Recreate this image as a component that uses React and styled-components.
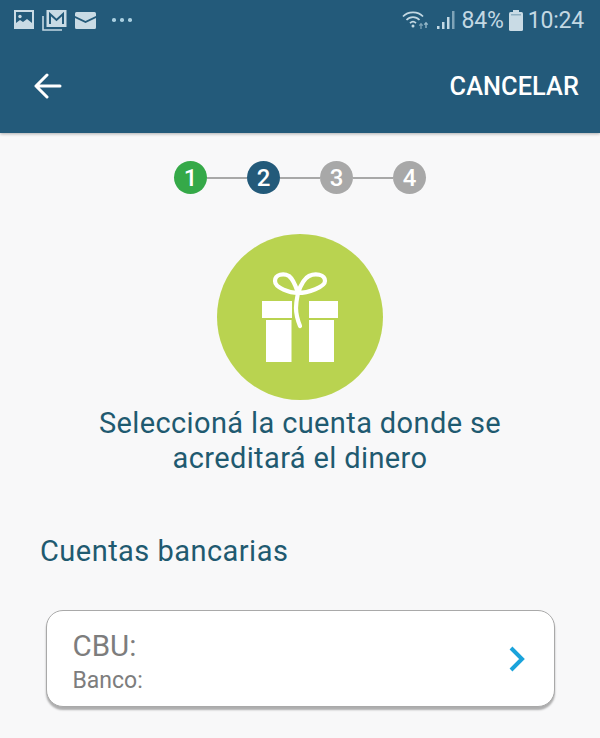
import React from "react";
import styled, { createGlobalStyle } from "styled-components";

const Global = createGlobalStyle`
  html, body { margin: 0; padding: 0; height: 100%; background: #f8f8f9; }
  body { font-family: Roboto, "Liberation Sans", sans-serif; overflow: hidden; }
`;
const Page = styled.div`width: 600px; height: 738px; overflow: hidden; background: #f8f8f9; display: flex; flex-direction: column; align-items: stretch;`;
const Header = styled.header`height: 133px; background: #235a7a; box-shadow: 0 1px 3px rgba(0,0,0,.3); flex: none; display: flex; flex-direction: column;`;
const StatusBar = styled.div`height: 38px; padding: 1px 16px 0 14px; box-sizing: content-box; display: flex; align-items: center; justify-content: space-between; color: #c3d8e3;`;
const StatusGroup = styled.div`display: flex; align-items: center; gap: ${p => p.$gap || 0}px;`;
const Dots = styled.div`display: flex; gap: 4.5px; margin-left: 8px;`;
const Dot = styled.span`width: 3.5px; height: 3.5px; border-radius: 50%; background: #a9cfe0;`;
const StatusText = styled.span`font-size: 23px; letter-spacing: -0.2px; color: #c3d8e3;`;
const AppBar = styled.div`flex: 1; display: flex; align-items: center; justify-content: space-between; padding: 0 21px 0 34px;`;
const Cancel = styled.span`font-size: 25.3px; font-weight: 500; color: #fff; letter-spacing: 0.1px;`;
const Main = styled.main`flex: 1; display: flex; flex-direction: column; align-items: center; position: relative;`;
const Stepper = styled.div`display: flex; align-items: center; margin-top: 28px;`;
const Step = styled.div`width: 33px; height: 33px; border-radius: 50%; background: ${p => p.$bg}; color: #fff; display: flex; align-items: center; justify-content: center; font-size: 24px; font-weight: 500; flex: none;`;
const Line = styled.div`width: 40px; height: 2px; background: #a8a8a8;`;
const GiftCircle = styled.div`width: 166px; height: 166px; border-radius: 50%; background: #b9d350; margin-top: 40px; flex: none; display: flex; align-items: center; justify-content: center;`;
const Title = styled.h1`margin: 6px 0 0; font-size: 29px; line-height: 35px; font-weight: 400; color: #1f5a70; text-align: center; letter-spacing: 0.38px;`;
const Section = styled.h2`align-self: flex-start; margin: 59px 0 0 40px; font-size: 29px; line-height: 32px; font-weight: 400; color: #1f5a70; letter-spacing: 0.47px;`;
const Card = styled.div`box-sizing: border-box; width: 509px; height: 97px; margin-top: 43px; background: #fff; border: 1.5px solid #a9a9a9; border-radius: 17px; box-shadow: 0 3px 2px rgba(0,0,0,.3); display: flex; align-items: center; justify-content: space-between; padding: 0 29px 0 26px;`;
const CardText = styled.div`display: flex; flex-direction: column; padding-top: 7px;`;
const Cbu = styled.span`font-size: 29.5px; line-height: 36px; color: #7d7d7d;`;
const Banco = styled.span`font-size: 23px; line-height: 33px; color: #7d7d7d;`;

const ImageIcon = () => (
  <svg width="20" height="20" viewBox="0 0 20 20">
    <rect x="0" y="0" width="20" height="19" fill="#c9dbe5" />
    <rect x="2" y="2" width="16" height="15" fill="#235a7a" />
    <circle cx="6" cy="6.5" r="1.7" fill="#c9dbe5" />
    <path d="M2 17v-4l4-3 3 2 4-3 5 4v4z" fill="#c9dbe5" />
  </svg>
);
const MailStack = () => (
  <svg width="25" height="21" viewBox="0 0 25 21">
    <path d="M1 6v14h19" fill="none" stroke="#c3d8e3" strokeWidth="1.6" />
    <rect x="4.5" y="0" width="20" height="17" fill="#c9dbe5" />
    <path d="M8 14V4l6.5 6L21 4v10" fill="none" stroke="#235a7a" strokeWidth="2" />
  </svg>
);
const Mail = () => (
  <svg width="21" height="17" viewBox="0 0 21 17">
    <path d="M0 1.5Q0 0 1.5 0h18Q21 0 21 1.5V4l-10.500 5L0 4z" fill="#c9dbe5" />
    <path d="M0 6l10.500 5L21 6v9.500Q21 17 19.500 17h-18Q0 17 0 15.500z" fill="#c9dbe5" />
  </svg>
);
const Wifi = () => (
  <svg width="30" height="20" viewBox="0 0 30 20" fill="none" stroke="#c3d8e3" strokeWidth="1.7">
    <path d="M1 6.500C6 1 16 1 21 6.500" />
    <path d="M4.500 10C8 6.200 14 6.200 17.500 10" />
    <path d="M8 13.200C10 11.200 12 11.200 14 13.200" />
    <circle cx="11" cy="16" r="1.500" fill="#c3d8e3" stroke="none" />
    <path d="M19 19v-5M17.300 15.700l1.700-2 1.700 2" stroke="#7fa4b8" strokeWidth="1.300" />
    <path d="M24 18v-5M22.300 14.700l1.700-2 1.700 2" stroke="#9bbccc" strokeWidth="1.300" />
  </svg>
);
const Signal = () => (
  <svg width="20" height="20" viewBox="0 0 20 20" fill="#c3d8e3">
    <rect x="0" y="16" width="2.500" height="3" />
    <rect x="5" y="12" width="2.500" height="7" />
    <rect x="10" y="7" width="2.500" height="12" />
    <rect x="15" y="1" width="2.500" height="18" fill="#7fa4b8" />
  </svg>
);
const Battery = () => (
  <svg width="14" height="21" viewBox="0 0 14 21" fill="#c9dbe5">
    <rect x="4" y="0" width="6" height="2.500" />
    <rect x="0" y="2" width="14" height="19" rx="1.500" />
    <rect x="2" y="4" width="10" height="1.500" fill="#8fb0c2" />
  </svg>
);
const BackArrow = () => (
  <svg width="28" height="26" viewBox="0 0 28 26" fill="none" stroke="#fff" strokeWidth="3" strokeLinecap="round" strokeLinejoin="round">
    <path d="M2 13h24M13 2L2 13l11 11" />
  </svg>
);
const Gift = () => (
  <svg width="80" height="92" viewBox="0 0 80 92">
    <path d="M2 30h30v17H2z" fill="#fff" />
    <path d="M49 30h29v17H49z" fill="#fff" />
    <path d="M6 49h25.500v42H6z" fill="#fff" />
    <path d="M49 49h25v42H49z" fill="#fff" />
    <path d="M40 55C38 50 36 44 36 37C36 31 37 27 38 22" fill="none" stroke="#fff" strokeWidth="4.200" strokeLinecap="round" />
    <path d="M38 22C30 22 15 17 15 10C15 3 24 2 29 5C34 9 36 16 38 22C40 16 43 8 49 5C55 2 65 3 65 10C65 16 48 22 38 22Z" fill="none" stroke="#fff" strokeWidth="4.200" strokeLinejoin="round" />
  </svg>
);
const Chevron = () => (
  <svg width="16" height="26" viewBox="0 0 16 26" fill="none" stroke="#1aa3db" strokeWidth="4">
    <path d="M2 2l11 11L2 24" />
  </svg>
);

const steps = [["1", "#35a948"], ["2", "#235a7a"], ["3", "#a8a8a8"], ["4", "#a8a8a8"]];

export default function App() {
  return (
    <Page>
      <Global />
      <Header>
        <StatusBar>
          <StatusGroup $gap={8}>
            <ImageIcon /><MailStack /><Mail />
            <Dots><Dot /><Dot /><Dot /></Dots>
          </StatusGroup>
          <StatusGroup $gap={5}>
            <Wifi /><Signal />
            <StatusText>84%</StatusText>
            <Battery />
            <StatusText>10:24</StatusText>
          </StatusGroup>
        </StatusBar>
        <AppBar>
          <BackArrow />
          <Cancel>CANCELAR</Cancel>
        </AppBar>
      </Header>
      <Main>
        <Stepper>
          {steps.map(([n, c], i) => (
            <React.Fragment key={n}>
              {i > 0 && <Line />}
              <Step $bg={c}>{n}</Step>
            </React.Fragment>
          ))}
        </Stepper>
        <GiftCircle><Gift /></GiftCircle>
        <Title>Seleccioná la cuenta donde se<br />acreditará el dinero</Title>
        <Section>Cuentas bancarias</Section>
        <Card>
          <CardText>
            <Cbu>CBU:</Cbu>
            <Banco>Banco:</Banco>
          </CardText>
          <Chevron />
        </Card>
      </Main>
    </Page>
  );
}
